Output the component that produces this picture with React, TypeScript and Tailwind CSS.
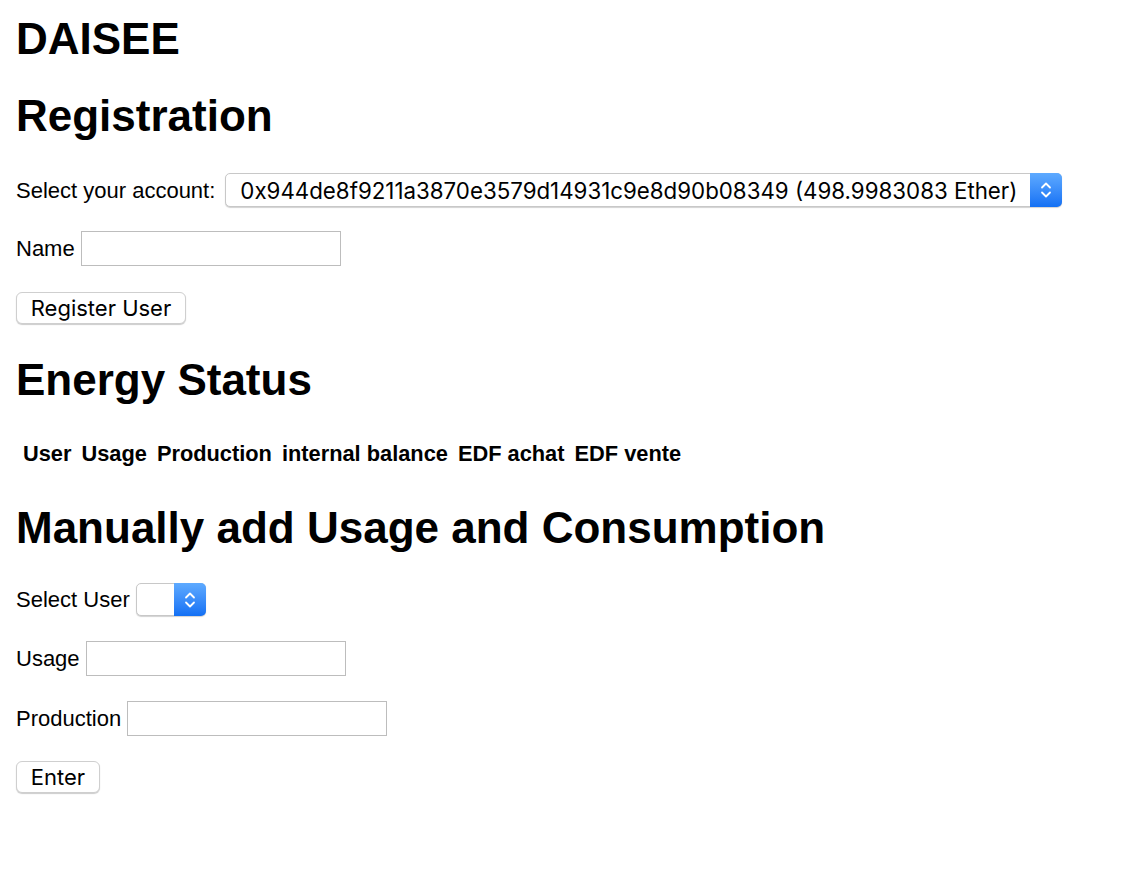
import React from "react";

const Chevrons = () => (
  <svg width="12" height="20" viewBox="0 0 12 20" fill="none">
    <path d="M2 7.5 L6 3.5 L10 7.5" stroke="white" strokeWidth="1.8" strokeLinecap="round" strokeLinejoin="round" />
    <path d="M2 12.5 L6 16.5 L10 12.5" stroke="white" strokeWidth="1.8" strokeLinecap="round" strokeLinejoin="round" />
  </svg>
);

const SelectBox = ({ value, width, height }: { value: string; width: string; height: string }) => (
  <div
    className={`flex ${height} ${width} rounded-[5px] border border-[#c8c8c8] bg-white shadow-[0_1px_1px_rgba(0,0,0,0.18)]`}
  >
    <span className="flex flex-1 items-center overflow-hidden whitespace-nowrap pl-[14px] font-['Inter',sans-serif] text-[22.3px] text-black">
      {value}
    </span>
    <span className="-my-px -mr-px flex w-[32px] items-center justify-center rounded-r-[5px] bg-gradient-to-b from-[#5eaaff] to-[#1270f4]">
      <Chevrons />
    </span>
  </div>
);

const TextInput = ({ className }: { className: string }) => (
  <input
    type="text"
    className={`h-[35px] w-[260px] border border-[#bdbdbd] bg-white px-1 text-[22px] outline-none ${className}`}
  />
);

const Button = ({ label, width }: { label: string; width: string }) => (
  <button
    className={`flex h-[32px] ${width} items-center justify-center rounded-[6px] border border-[#cfcfcf] bg-white font-['Inter',sans-serif] text-[22px] text-black shadow-[0_1px_1px_rgba(0,0,0,0.2)]`}
  >
    {label}
  </button>
);

const Heading = ({ children, className }: { children: React.ReactNode; className: string }) => (
  <h1 className={`text-[44px] leading-[50px] font-bold text-black ${className}`}>{children}</h1>
);

export default function App() {
  const columns = ["User", "Usage", "Production", "internal balance", "EDF achat", "EDF vente"];

  return (
    <div className="min-h-[880px] bg-white pl-4 pt-[14px] font-['Liberation_Sans',Arial,sans-serif] text-[22px] leading-[25px] text-black">
      <Heading className="">DAISEE</Heading>

      <Heading className="mt-[27px]">Registration</Heading>

      <div className="mt-[32px] flex items-center">
        <span>Select your account:</span>
        <div className="ml-[10px]">
          <SelectBox
            value="0x944de8f9211a3870e3579d14931c9e8d90b08349 (498.9983083 Ether)"
            width="w-[837px]"
            height="h-[34px]"
          />
        </div>
      </div>

      <div className="mt-[24px] flex items-center">
        <span>Name</span>
        <TextInput className="ml-[6px]" />
      </div>

      <div className="mt-[26px]">
        <Button label="Register User" width="w-[170px]" />
      </div>

      <Heading className="mt-[31px]">Energy Status</Heading>

      <div className="mt-[36px] flex gap-[10px] pl-[7px] text-[21.8px] font-bold">
        {columns.map((c) => (
          <span key={c}>{c}</span>
        ))}
      </div>

      <Heading className="mt-[37px]">Manually add Usage and Consumption</Heading>

      <div className="mt-[30px] flex items-center">
        <span>Select User</span>
        <div className="ml-[6px]">
          <SelectBox value="" width="w-[70px]" height="h-[33px]" />
        </div>
      </div>

      <div className="mt-[25px] flex items-center">
        <span>Usage</span>
        <TextInput className="ml-[6px]" />
      </div>

      <div className="mt-[25px] flex items-center">
        <span>Production</span>
        <TextInput className="ml-[6px]" />
      </div>

      <div className="mt-[25px]">
        <Button label="Enter" width="w-[84px]" />
      </div>
    </div>
  );
}
